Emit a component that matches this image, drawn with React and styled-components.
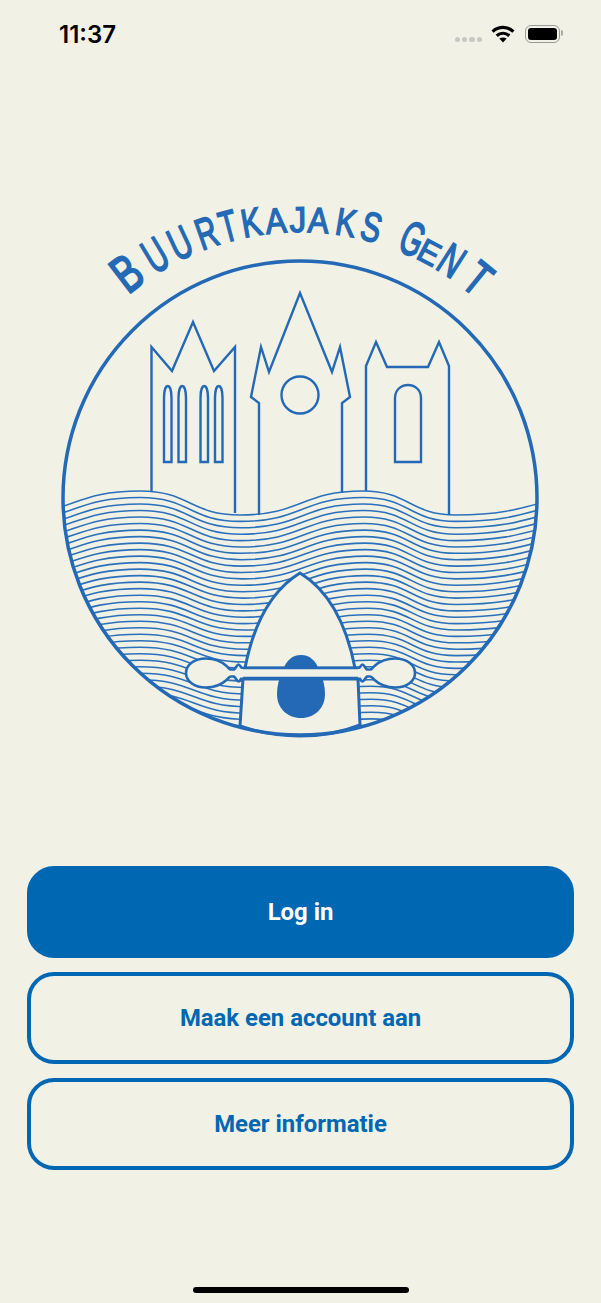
import React from "react";
import styled, { createGlobalStyle } from "styled-components";

const CREAM = "#f1f1e6";
const BLUE = "#0067b3";
const INK = "#2469b5";
const WAVE = "#2b70bb";

const GlobalStyle = createGlobalStyle`
  html, body {
    margin: 0;
    padding: 0;
    background: ${CREAM};
  }
  * {
    box-sizing: border-box;
  }
`;

const Page = styled.div`
  width: 601px;
  height: 1303px;
  background: ${CREAM};
  display: flex;
  flex-direction: column;
  overflow: hidden;
`;

const StatusBar = styled.div`
  height: 68px;
  padding: 21px 41px 0 59px;
  display: flex;
  align-items: flex-start;
`;

const Time = styled.span`
  font-family: Inter, "Liberation Sans", sans-serif;
  font-size: 24px;
  font-weight: 600;
  line-height: 27px;
  color: #000;
`;

const StatusIcons = styled.div`
  margin-left: auto;
  display: flex;
  align-items: flex-start;
  padding-top: 4px;
`;

const Dots = styled.div`
  display: flex;
  gap: 2px;
  margin: 12px 9px 0 0;
`;

const Dot = styled.i`
  width: 5.3px;
  height: 5.3px;
  border-radius: 50%;
  background: #c8c8c2;
`;

const Battery = styled.div`
  position: relative;
  width: 35px;
  height: 18px;
  margin-left: 10px;
  padding: 2px;
  border: 1.5px solid #9a9a96;
  border-radius: 6px;

  &::before {
    content: "";
    display: block;
    height: 100%;
    background: #000;
    border-radius: 3px;
  }

  &::after {
    content: "";
    position: absolute;
    right: -4px;
    top: 4px;
    width: 2px;
    height: 6px;
    background: #a8a8a4;
    border-radius: 0 2px 2px 0;
  }
`;

const LogoSvg = styled.svg`
  display: block;
  width: 601px;
  height: 560px;
  margin-top: 122px;
  flex: none;
`;

const LogoLetter = styled.text`
  font-family: "Liberation Sans", sans-serif;
  fill: ${INK};
  text-anchor: middle;
  stroke: ${INK};
  stroke-width: 1.3;
`;

const Actions = styled.div`
  margin-top: 116px;
  padding: 0 27px;
  display: flex;
  flex-direction: column;
  gap: 14px;
`;

const ActionButton = styled.button`
  height: 92px;
  border-radius: 27px;
  border: 4px solid ${BLUE};
  background: ${({ $primary }) => ($primary ? BLUE : "transparent")};
  color: ${({ $primary }) => ($primary ? "#fff" : BLUE)};
  font-family: Roboto, "Liberation Sans", sans-serif;
  font-size: 23.9px;
  font-weight: 700;
  padding: 0;
`;

const HomeBar = styled.div`
  width: 216px;
  height: 6px;
  margin: auto auto 10px;
  background: #000;
  border-radius: 3px;
`;

// angle from the circle centre, glyph height, horizontal squeeze
const LETTERS = [
  ["B", -37.6, 38, 1.12],
  ["U", -30.8, 35, 0.88],
  ["U", -25.2, 33, 0.88],
  ["R", -19.4, 32, 0.86],
  ["T", -14.8, 32, 0.86],
  ["K", -10, 29, 0.92],
  ["A", -5, 26, 0.95],
  ["J", -0.4, 26, 1],
  ["A", 3.8, 26, 0.95],
  ["K", 9.5, 28, 0.92],
  ["S", 14.8, 30, 0.9],
  ["G", 23.5, 35, 0.85],
  ["E", 27.8, 24, 0.95],
  ["N", 32.6, 33, 0.9],
  ["T", 39, 35, 1.05],
];

const CX = 300;
const CY = 498;
const BASE_R = 266;

const letterTransform = (angle, height, squeeze) => {
  const rad = (angle * Math.PI) / 180;
  const x = CX + BASE_R * Math.sin(rad);
  const y = CY - BASE_R * Math.cos(rad);
  return `translate(${x.toFixed(1)} ${y.toFixed(1)}) rotate(${angle}) scale(${squeeze} ${(height / 24).toFixed(3)})`;
};

// one wave line, through its crests and troughs with flat tangents
const wavePath = (i) => {
  const off = i * 6.45;
  const amp = 12 - i * 0.06;
  const drift = i * 0.25;
  const stops = [
    [5, 503 + amp],
    [140, 503 - amp],
    [240 + drift, 503 + amp],
    [363 + drift, 503 - amp],
    [456, 503 + amp],
    [625, 503 - amp],
  ].map(([x, y]) => [x, y + off]);
  let d = `M${stops[0][0]} ${stops[0][1].toFixed(1)}`;
  for (let k = 1; k < stops.length; k++) {
    const [x0] = stops[k - 1];
    const [x1, y1] = stops[k];
    const mid = (x0 + x1) / 2;
    const y0 = stops[k - 1][1];
    d += `C${mid.toFixed(1)} ${y0.toFixed(1)} ${mid.toFixed(1)} ${y1.toFixed(1)} ${x1.toFixed(1)} ${y1.toFixed(1)}`;
  }
  return d;
};

const WAVES = Array.from({ length: 40 }, (_, i) => wavePath(i));

const Spoon = ({ flip }) => (
  <path
    transform={flip ? "matrix(-1 0 0 1 601 0)" : undefined}
    d="M244 668H242C241 668 240 664.500 238.500 664.500S236 668 234 669.500H231C229 669.500 229 668 226.500 666 221 661 214 658.500 206 658.500 194 658.500 186 665 186 673S194 687.500 206 687.500C214 687.500 221 685 226.500 680 229 678 229 676.500 231 676.500H234C236 678 237 681.500 238.500 681.500S241 678 242 678H244Z"
    fill={CREAM}
    stroke={INK}
    strokeWidth="2.600"
  />
);

const Window = ({ x }) => (
  <path d={`M${x} 462V398C${x} 391 ${x + 1.5} 386 ${x + 3.75} 386 ${x + 6} 386 ${x + 7.5} 391 ${x + 7.5} 398V462Z`} />
);

const Logo = () => (
  <LogoSvg viewBox="0 190 601 560" fill="none">
    <defs>
      <clipPath id="disc">
        <circle cx={CX} cy={CY} r="237" />
      </clipPath>
    </defs>

    {LETTERS.map(([ch, angle, height, squeeze], i) => (
      <LogoLetter key={i} fontSize="33" transform={letterTransform(angle, height, squeeze)}>
        {ch}
      </LogoLetter>
    ))}

    <g clipPath="url(#disc)" stroke={WAVE} strokeWidth="1.600">
      {WAVES.map((d, i) => (
        <path key={i} d={d} />
      ))}
    </g>

    <g stroke={INK} strokeWidth="2.400" strokeLinejoin="miter">
      <path d="M151.500 491V347L172 371 193 322 214 371 235 347V513" />
      <Window x={164} />
      <Window x={178.500} />
      <Window x={200.500} />
      <Window x={215} />
      <path d="M259 515V403L251 397 261 347 269 372 300 293 332 372 340 347 350 397 342 403V493" />
      <circle cx="300" cy="395" r="18.500" />
      <path d="M366 491V366L376 342 387 367H428L439 342 449 366V515" />
      <path d="M395 462V398c0-8 6-13 13-13s13 5 13 13v64z" />
    </g>

    <path
      d="M243 679 240 726C260 733 280 736 300 736S340 733 360 725L358 679Z"
      fill={CREAM}
      stroke={INK}
      strokeWidth="3"
    />
    <path
      d="M245 668C254 622 272 590 300 573 328 590 346 622 355 668Z"
      fill={CREAM}
      stroke={INK}
      strokeWidth="3"
    />
    <path
      d="M301 655C310 655 316 661 319 670 323 678 325 686 325 694 325 708 315 718 301 718S277 708 277 694C277 686 279 678 283 670 286 661 292 655 301 655Z"
      fill={INK}
    />
    <Spoon />
    <Spoon flip />
    <rect x="241" y="669" width="119" height="8.500" fill={CREAM} />
    <path d="M243 668H358M243 678H358" stroke={INK} strokeWidth="2.600" />
    <circle cx={CX} cy={CY} r="237" stroke={INK} strokeWidth="3.500" />
  </LogoSvg>
);

const WifiIcon = () => (
  <svg width="24" height="18" viewBox="0 0 24 18" fill="none" stroke="#000" strokeWidth="3.200">
    <path d="M1.600 6.600C7.500 1 16.500 1 22.400 6.600" />
    <path d="M5.700 10.700C9.300 7.400 14.700 7.400 18.300 10.700" />
    <path d="M12 17.500 8.300 13.600C10.500 12 13.500 12 15.700 13.600Z" fill="#000" stroke="none" />
  </svg>
);

export default function App() {
  return (
    <>
      <GlobalStyle />
      <Page>
        <StatusBar>
          <Time>11:37</Time>
          <StatusIcons>
            <Dots>
              <Dot />
              <Dot />
              <Dot />
              <Dot />
            </Dots>
            <WifiIcon />
            <Battery />
          </StatusIcons>
        </StatusBar>
        <Logo />
        <Actions>
          <ActionButton $primary>Log in</ActionButton>
          <ActionButton>Maak een account aan</ActionButton>
          <ActionButton>Meer informatie</ActionButton>
        </Actions>
        <HomeBar />
      </Page>
    </>
  );
}
